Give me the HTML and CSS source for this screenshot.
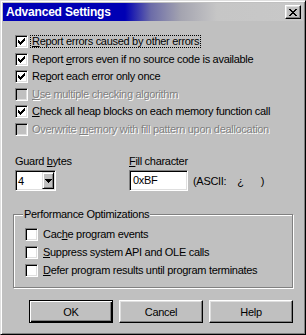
FILE: index.html
```html
<!DOCTYPE html>
<html>
<head>
<meta charset="utf-8">
<title>Advanced Settings</title>
<link rel="stylesheet" href="styles.css">
</head>
<body>
<div class="window">
  <div class="titlebar">
    <span class="title">Advanced Settings</span>
    <span class="close"><svg width="8" height="7" viewBox="0 0 8 7" shape-rendering="crispEdges"><path d="M0 0h2v1h-2zM6 0h2v1h-2zM1 1h2v1h-2zM5 1h2v1h-2zM2 2h4v1h-4zM3 3h2v1h-2zM2 4h4v1h-4zM1 5h2v1h-2zM5 5h2v1h-2zM0 6h2v1h-2zM6 6h2v1h-2z" fill="#000"/></svg></span>
  </div>
  <div class="content">
    <div class="checks">
      <div class="row"><span class="box"><svg class="tick" width="7" height="7" viewBox="0 0 7 7" shape-rendering="crispEdges"><path d="M6 0h1v1h-1zM5 1h2v1h-2zM0 2h1v1h-1zM4 2h3v1h-3zM0 3h2v1h-2zM3 3h3v1h-3zM0 4h5v1h-5zM1 5h3v1h-3zM2 6h1v1h-1z" fill="#000"/></svg></span><span class="lbl focus"><u>R</u>eport errors caused by other errors</span></div>
      <div class="row"><span class="box"><svg class="tick" width="7" height="7" viewBox="0 0 7 7" shape-rendering="crispEdges"><path d="M6 0h1v1h-1zM5 1h2v1h-2zM0 2h1v1h-1zM4 2h3v1h-3zM0 3h2v1h-2zM3 3h3v1h-3zM0 4h5v1h-5zM1 5h3v1h-3zM2 6h1v1h-1z" fill="#000"/></svg></span><span class="lbl">Report <u>e</u>rrors even if no source code is available</span></div>
      <div class="row"><span class="box"><svg class="tick" width="7" height="7" viewBox="0 0 7 7" shape-rendering="crispEdges"><path d="M6 0h1v1h-1zM5 1h2v1h-2zM0 2h1v1h-1zM4 2h3v1h-3zM0 3h2v1h-2zM3 3h3v1h-3zM0 4h5v1h-5zM1 5h3v1h-3zM2 6h1v1h-1z" fill="#000"/></svg></span><span class="lbl">Re<u>p</u>ort each error only once</span></div>
      <div class="row"><span class="box off"></span><span class="lbl dis"><u>U</u>se multiple checking algorithm</span></div>
      <div class="row"><span class="box"><svg class="tick" width="7" height="7" viewBox="0 0 7 7" shape-rendering="crispEdges"><path d="M6 0h1v1h-1zM5 1h2v1h-2zM0 2h1v1h-1zM4 2h3v1h-3zM0 3h2v1h-2zM3 3h3v1h-3zM0 4h5v1h-5zM1 5h3v1h-3zM2 6h1v1h-1z" fill="#000"/></svg></span><span class="lbl"><u>C</u>heck all heap blocks on each memory function call</span></div>
      <div class="row"><span class="box off"></span><span class="lbl dis">Overwrite <u>m</u>emory with fill pattern upon deallocation</span></div>
    </div>

    <div class="fields">
      <div class="field guard">
        <div class="flabel">Guard <u>b</u>ytes</div>
        <div class="combo"><span class="cval">4</span><span class="cbtn"><svg width="7" height="4" viewBox="0 0 7 4" shape-rendering="crispEdges"><path d="M0 0h7v1h-7zM1 1h5v1h-5zM2 2h3v1h-3zM3 3h1v1h-1z" fill="#000"/></svg></span></div>
      </div>
      <div class="field fill">
        <div class="flabel"><u>F</u>ill character</div>
        <div class="fillrow"><div class="edit">0xBF</div><span class="ascii">(ASCII:</span><span class="achar">¿</span><span class="aclose">)</span></div>
      </div>
    </div>

    <fieldset class="group">
      <legend>Performance Optimizations</legend>
      <div class="grows">
        <div class="row grow"><span class="box"></span><span class="lbl">Cac<u>h</u>e program events</span></div>
        <div class="row grow"><span class="box"></span><span class="lbl"><u>S</u>uppress system API and OLE calls</span></div>
        <div class="row grow"><span class="box"></span><span class="lbl"><u>D</u>efer program results until program terminates</span></div>
      </div>
    </fieldset>

    <div class="buttons">
      <button class="btn default">OK</button>
      <button class="btn">Cancel</button>
      <button class="btn">Help</button>
    </div>
  </div>
</div>
</body>
</html>
```

FILE: styles.css
```css
* { box-sizing: border-box; }
html, body { margin: 0; padding: 0; }
body {
  width: 306px;
  height: 335px;
  overflow: hidden;
  background: #c0c0c0;
  font-family: "Liberation Sans", Arial, sans-serif;
  font-size: 11px;
  letter-spacing: -0.3px;
  color: #000;
}
.window {
  width: 306px;
  height: 335px;
  background: #c0c0c0;
  border: 1px solid;
  border-color: #dfdfdf #000 #000 #dfdfdf;
  box-shadow: inset 1px 1px #fff, inset -1px -1px #808080;
  padding: 2px;
  display: flex;
  flex-direction: column;
}
.titlebar {
  height: 18px;
  flex: none;
  display: flex;
  align-items: center;
  justify-content: space-between;
  padding: 0 2px 0 3px;
  color: #fff;
  background: linear-gradient(to right, #0000b4 0px, #0000b4 122px, #6c6ca8 148px, #a4a4b0 178px, #c6c6c6 214px, #c8c8c8 100%);
}
.title {
  font-weight: bold;
  font-size: 12px;
  letter-spacing: -0.2px;
}
.close {
  width: 16px;
  height: 14px;
  display: flex;
  align-items: center;
  justify-content: center;
  background: #c0c0c0;
  border: 1px solid;
  border-color: #fff #000 #000 #fff;
  box-shadow: inset -1px -1px #808080, inset 1px 1px #dfdfdf;
}
.close svg { display: block; }

.content {
  display: flex;
  flex-direction: column;
  padding-top: 12px;
}
.checks { padding-left: 12px; }
.row {
  display: flex;
  align-items: center;
  height: 17.5px;
  white-space: nowrap;
}
.box {
  width: 13px;
  height: 13px;
  flex: none;
  background: #fff;
  border: 1px solid;
  border-color: #808080 #fff #fff #808080;
  box-shadow: inset 1px 1px #000, inset -1px -1px #dfdfdf;
  margin-right: 2px;
}
.box.off { background: #c0c0c0; }
.tick { display: block; margin: 2px 0 0 2px; }
.lbl {
  border: 1px dotted transparent;
  padding: 0 1px;
  line-height: 11px;
}
.lbl.focus { border-color: #000; }
.lbl.dis { color: #808080; text-shadow: 1px 1px #fff; }

.fields {
  display: flex;
  margin-top: 17px;
  padding-left: 12px;
}
.guard { width: 114px; flex: none; }
.flabel { height: 13px; line-height: 13px; white-space: nowrap; }
.combo {
  margin-top: 2px;
  width: 41px;
  height: 21px;
  background: #fff;
  border: 1px solid;
  border-color: #808080 #fff #fff #808080;
  box-shadow: inset 1px 1px #000, inset -1px -1px #dfdfdf;
  padding: 1px;
  display: flex;
  align-items: center;
}
.cval { flex: 1; padding-left: 1px; }
.cbtn {
  width: 12px;
  height: 17px;
  display: flex;
  align-items: center;
  justify-content: center;
  background: #c0c0c0;
  border: 1px solid;
  border-color: #dfdfdf #000 #000 #dfdfdf;
  box-shadow: inset 1px 1px #fff, inset -1px -1px #808080;
}
.cbtn svg { display: block; }
.fillrow {
  margin-top: 2px;
  display: flex;
  align-items: center;
  white-space: nowrap;
}
.edit {
  width: 59px;
  height: 21px;
  background: #fff;
  border: 1px solid;
  border-color: #808080 #fff #fff #808080;
  box-shadow: inset 1px 1px #000, inset -1px -1px #dfdfdf;
  padding-left: 3px;
  line-height: 19px;
}
.ascii { margin-left: 5px; }
.achar { margin-left: 11px; }
.aclose { margin-left: 17px; }

.group {
  margin: 17px 10px 0 10px;
  padding: 4px 0 8px 0;
  border: 1px solid #808080;
  box-shadow: inset 1px 1px #fff, 1px 1px #fff;
  min-width: 0;
}
.group legend {
  margin-left: 9px;
  padding: 0 1px;
  line-height: 13px;
  background: #c0c0c0;
}
.grows { padding-left: 11px; }
.grow { height: 18px; }
.grow .box { margin-right: 3px; }

.buttons {
  display: flex;
  gap: 6px;
  padding-left: 26px;
  margin-top: 12px;
}
.btn {
  width: 84px;
  height: 23px;
  padding: 0;
  font: inherit;
  letter-spacing: inherit;
  color: #000;
  background: #c0c0c0;
  border: 1px solid;
  border-color: #fff #000 #000 #fff;
  box-shadow: inset -1px -1px #808080, inset 1px 1px #dfdfdf;
}
.btn.default {
  border-color: #000;
  box-shadow: inset 1px 1px #fff, inset -1px -1px #000, inset -2px -2px #808080;
}
```
